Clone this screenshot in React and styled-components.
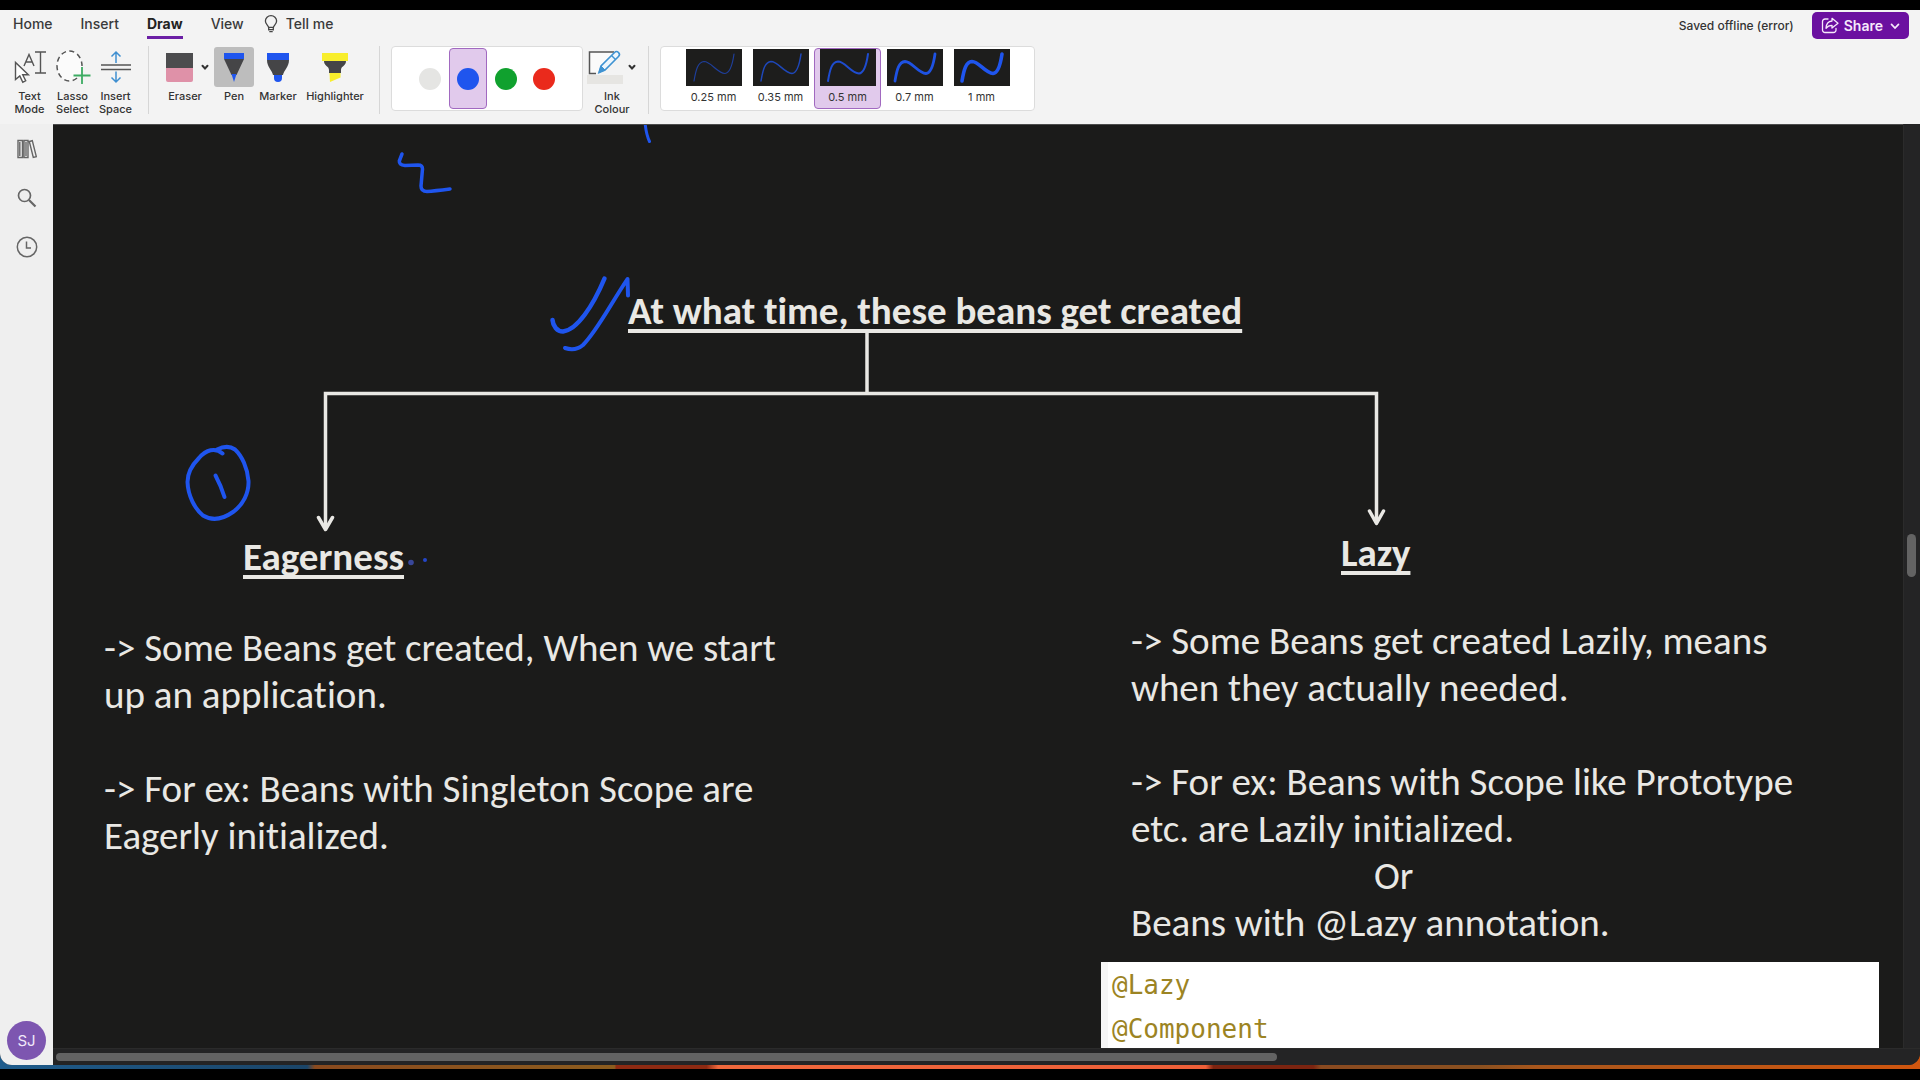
import React, { useState } from "react";
import styled, { createGlobalStyle } from "styled-components";

const UI_FONT = `Inter, "Liberation Sans", sans-serif`;
const NOTE_FONT = `Calibri, Carlito, Lato, sans-serif`;
const INK = "#1f55ee";
const CHALK = "#e9e8e4";

const GlobalStyle = createGlobalStyle`
  * { box-sizing: border-box; }
  body { margin: 0; background: #000; font-family: ${UI_FONT}; color: #333; }
  button { font: inherit; color: inherit; background: none; border: 0; padding: 0; margin: 0; }
  p, h1, h2, pre { margin: 0; }
  svg { display: block; flex: none; }
`;

const Screen = styled.div`
  height: 100vh;
  padding: 10px 0 11px;
  display: flex;
`;

const Desktop = styled.div`
  flex: 1;
  min-width: 0;
  display: flex;
  padding-bottom: 4px;
  background: linear-gradient(
    90deg,
    #1f5c8c 0%, #1b4568 16%, #8a4a1e 16.4%, #8c5c1e 32%,
    #8e2a12 32.1%, #8e2a12 36.8%, #f0683c 37.4%, #ee5f38 62.8%,
    #7c2410 63.2%, #7c2410 68.4%, #8a4a20 68.8%, #8a5020 77%, #a8561c 80%, #d0560f 100%
  );
`;

const Window = styled.div`
  flex: 1;
  min-width: 0;
  display: flex;
  flex-direction: column;
  background: #242425;
  border-radius: 0 0 12px 12px;
  overflow: hidden;
`;

const Ribbon = styled.header`
  height: 114px;
  flex: none;
  background: #f3f3f3;
`;

const TabRow = styled.div`
  display: flex;
  align-items: flex-start;
  justify-content: space-between;
  height: 36px;
  padding: 0 11px 0 13px;
`;

const TabBar = styled.div`
  display: flex;
  gap: 20px;
`;

const Tabs = styled.nav`
  display: flex;
  gap: 28px;
`;

const Tab = styled.button`
  height: 29px;
  padding-top: 2px;
  line-height: 24px;
  font-size: 14px;
  font-weight: ${(p) => (p.$active ? 700 : 500)};
  color: ${(p) => (p.$active ? "#222" : "#3a3a3a")};
  border-bottom: 3px solid ${(p) => (p.$active ? "#6b1fa5" : "transparent")};
  display: flex;
  align-items: center;
  gap: 8px;
`;

const Actions = styled.div`
  display: flex;
  align-items: center;
  gap: 18px;
  padding-top: 2px;
`;

const Status = styled.span`
  font-size: 12px;
  font-weight: 500;
`;

const ShareButton = styled.button`
  display: flex;
  align-items: center;
  gap: 5px;
  height: 27px;
  padding: 0 7px 0 9px;
  border-radius: 5px;
  background: #6b10a0;
  color: #f6e9fb;
  font-size: 14px;
  font-weight: 600;
`;

const Tools = styled.div`
  display: flex;
  align-items: flex-start;
  padding-left: 8px;
`;

const ToolGroup = styled.div`
  display: flex;
  gap: ${(p) => p.$gap || 0}px;
`;

const Divider = styled.div`
  width: 1px;
  height: 68px;
  margin: 0 11px;
  background: #d6d6d6;
`;

const Tool = styled.button`
  width: ${(p) => p.$w}px;
  padding-top: 1px;
  display: flex;
  flex-direction: column;
  align-items: center;
  gap: 3px;
  font-size: 11px;
  font-weight: 500;
  line-height: 13px;
`;

const ToolIcon = styled.span`
  width: ${(p) => (p.$split ? "100%" : "40px")};
  height: 40px;
  display: flex;
  align-items: center;
  justify-content: ${(p) => (p.$split ? "space-between" : "center")};
  border-radius: 3px;
  background: ${(p) => (p.$active ? "#bdbdbd" : "transparent")};
`;

const Panel = styled.div`
  display: flex;
  height: 65px;
  padding: 1px 19px 0;
  background: #fff;
  border: 1px solid #dcdcdc;
  border-radius: 4px;
`;

const Choice = styled.button`
  width: ${(p) => p.$w}px;
  height: 61px;
  border: 1px solid ${(p) => (p.$active ? "#a169c0" : "transparent")};
  border-radius: 4px;
  background: ${(p) => (p.$active ? "#e1caec" : "transparent")};
  display: flex;
  flex-direction: column;
  align-items: center;
  justify-content: ${(p) => (p.$top ? "flex-start" : "center")};
  gap: 4px;
  font-size: 11px;
  line-height: 14px;
`;

const Dot = styled.span`
  width: 22px;
  height: 22px;
  border-radius: 50%;
  background: ${(p) => p.$color};
`;

const Body = styled.div`
  flex: 1;
  min-height: 0;
  display: grid;
  grid-template-columns: 53px minmax(0, 1fr) 17px;
  grid-template-rows: minmax(0, 1fr) 17px;
`;

const Sidebar = styled.aside`
  grid-row: 1 / 3;
  display: flex;
  flex-direction: column;
  align-items: center;
  padding-bottom: 5px;
  background: #efefef;
`;

const SideButton = styled.button`
  width: 100%;
  height: 49px;
  display: flex;
  align-items: center;
  justify-content: center;
  color: #666;
`;

const Avatar = styled.button`
  width: 39px;
  height: 39px;
  margin-top: auto;
  border-radius: 50%;
  background: #7d56b0;
  color: #f1e8fa;
  font-size: 15px;
`;

const Canvas = styled.main`
  position: relative;
  overflow: hidden;
  background: #1b1b1a;
  border-top: 1px solid #4c4c4c;
  color: ${CHALK};
  font-family: ${NOTE_FONT};
  font-size: 39px;
  line-height: 47px;
  font-variant-ligatures: none;
`;

const Placed = styled.div`
  position: absolute;
  left: ${(p) => p.$x}px;
  top: ${(p) => p.$y}px;
  white-space: nowrap;
`;

const Heading = styled.h1`
  font-size: 39px;
  line-height: 47px;
  font-weight: 700;
  text-decoration: underline;
  text-decoration-thickness: 4px;
  text-underline-offset: 5px;
  text-decoration-skip-ink: none;
`;

const Note = styled.section`
  display: flex;
  flex-direction: column;
`;

const Para = styled.p`
  margin-bottom: ${(p) => (p.$spaced ? 47 : 0)}px;
`;

const Alternative = styled.p`
  padding-left: 243px;
`;

const Snippet = styled.pre`
  width: 778px;
  height: 132px;
  padding: 1px 0 0 4px;
  background: #fff;
  border-left: 7px solid #f6f6f6;
  color: #9c8423;
  font-family: "DejaVu Sans Mono", monospace;
  font-size: 26px;
  line-height: 44px;
`;

const Drawing = styled.svg`
  position: absolute;
  left: 0;
  top: 0;
  pointer-events: none;
`;

const Track = styled.div`
  display: flex;
  flex-direction: ${(p) => (p.$vertical ? "column" : "row")};
  padding: ${(p) => (p.$vertical ? "0 4px 0 3px" : "4px 3px")};
  background: #242425;
  border-${(p) => (p.$vertical ? "left" : "top")}: 1px solid #2b2b2b;
  grid-column: ${(p) => (p.$vertical ? "3" : "2 / 4")};
  &::before { content: ""; flex: ${(p) => p.$before}; }
  &::after { content: ""; flex: ${(p) => p.$after}; }
`;

const Thumb = styled.div`
  flex: ${(p) => p.$size};
  border-radius: 5px;
  background: #636363;
`;

const Chevron = ({ size = 10, width = 2 }) => (
  <svg width={size} height={size} viewBox="0 0 10 10" fill="none" stroke="currentColor" strokeWidth={width}>
    <path d="M2.500 3.800 5 6.500 7.500 3.800" strokeLinecap="round" />
  </svg>
);

const Bulb = () => (
  <svg width="14" height="18" viewBox="0 0 14 18" fill="none" stroke="#444" strokeWidth="1.3">
    <path d="M4.6 12.4C4.5 10.4 1.4 9.3 1.4 6a5.6 5.3 0 0 1 11.2 0c0 3.300-3.100 4.400-3.200 6.400zM4.800 14.600h4.400M5.300 16.700h3.400M4.700 12.400v3M9.300 12.400v3" />
  </svg>
);

const ShareIcon = () => (
  <svg width="18" height="17" viewBox="0 0 18 17" fill="none" stroke="currentColor" strokeWidth="1.300" strokeLinejoin="round" strokeLinecap="round">
    <path d="M7 2H4a2.500 2.500 0 0 0-2.500 2.500v8.500A2.500 2.500 0 0 0 4 15.500h8.500a2.500 2.500 0 0 0 2.500-2.500v-1.500" />
    <path d="M11 1.300 17 6.200 11 11V8.300c-3 0-4.600 1-6 3 .2-4 2-7 6-7.300z" />
  </svg>
);

const TextModeIcon = () => (
  <svg width="34" height="34" viewBox="0 0 34 34" fill="none" stroke="#555" strokeWidth="1.400">
    <path d="M22 2h11M22 23h11M27.500 2v21" />
    <path d="M11 16 16 4.500 21 16M12.800 12h6.500" />
    <path d="M2.500 12.500v17l4.300-3.600 3 6.300 2.900-1.400-3-6.100h5.700z" fill="#fff" />
  </svg>
);

const LassoIcon = () => (
  <svg width="36" height="36" viewBox="0 0 36 36" fill="none">
    <ellipse cx="14.500" cy="17" rx="12.500" ry="15" fill="#fbfbfb" />
    <path d="M22 29A12.500 15 0 1 1 27 17" stroke="#555" strokeWidth="1.500" strokeDasharray="5 3.500" />
    <path d="M27 18v17M18.500 26.500h17" stroke="#3cab62" strokeWidth="1.800" />
  </svg>
);

const InsertSpaceIcon = () => (
  <svg width="32" height="34" viewBox="0 0 32 34" fill="none">
    <path d="M1 15h30M1 19.500h30" stroke="#555" strokeWidth="1.500" />
    <path d="M16 13V2M11.500 6.500 16 2l4.500 4.500M16 21.500V32M11.500 27.500 16 32l4.500-4.500" stroke="#3f8fd0" strokeWidth="1.500" />
  </svg>
);

const EraserIcon = () => (
  <svg width="35" height="32" viewBox="-6 0 35 32">
    <path d="M0 2h27v16H0z" fill="#4c4c4e" />
    <path d="M0 17h27v12a2 2 0 0 1-2 2H2a2 2 0 0 1-2-2z" fill="#df91a8" />
  </svg>
);

const PenIcon = () => (
  <svg width="22" height="32" viewBox="0 0 22 32">
    <path d="M1 2h20v6H1z" fill={INK} />
    <path d="M1 8h20l-7.500 16h-5z" fill="#454547" />
    <path d="M8.500 23h5L11 31z" fill={INK} />
  </svg>
);

const MarkerIcon = () => (
  <svg width="24" height="32" viewBox="0 0 24 32">
    <path d="M1 2h22v7H1z" fill={INK} />
    <path d="M1 9h22c0 7-5 10-6 15H7C6 19 1 16 1 9z" fill="#454547" />
    <path d="M8 24h8v3a4 4 0 0 1-8 0z" fill={INK} />
  </svg>
);

const HighlighterIcon = () => (
  <svg width="28" height="32" viewBox="0 0 28 32">
    <path d="M1 2h26v8H1z" fill="#f8ee2c" />
    <path d="M3 10h22c0 5-5 5-5 9v3H8v-3c0-4-5-4-5-9z" fill="#454547" />
    <path d="M8.500 22h11v4.500L9 31z" fill="#f8ee2c" />
  </svg>
);

const InkColourIcon = () => (
  <svg width="36" height="36" viewBox="0 0 36 36" fill="none">
    <path d="M0 26h36v9H0z" fill="#e6e5e2" />
    <path d="M2.500 3h25L10 24H3z" fill="#fafafa" />
    <path d="M27 3H2.500v21.500H9" stroke="#555" strokeWidth="1.500" />
    <path d="M12 23.500 14 17 27.500 3.500a2.800 2.800 0 0 1 4 4L18 21z" fill="#eef6fc" stroke="#3f93d2" strokeWidth="1.600" />
    <path d="M12 23.500 14 17l4 4z" fill="#3f93d2" stroke="#3f93d2" />
    <path d="m24.500 6.500 4 4" stroke="#3f93d2" strokeWidth="1.500" />
  </svg>
);

const StrokeSample = ({ width, opacity }) => (
  <svg width="56" height="37" viewBox="0 0 56 37" fill="none">
    <path d="M0 0h56v37H0z" fill="#1d1d1c" />
    <path
      d="M8 32C10 20 12 13 18 12.500 25 12.500 31 24 39 24.500 45 24 47 12 48 5"
      stroke={INK}
      strokeWidth={width}
      strokeOpacity={opacity}
      strokeLinecap="round"
    />
  </svg>
);

const BooksIcon = () => (
  <svg width="20" height="20" viewBox="0 0 20 20" fill="none" stroke="currentColor" strokeWidth="1.400">
    <path d="M1 1.500h4.500v17H1zM7 1.500h4v17H7zM12.300 2.500l3-.8 4 16-3 .8zM2.800 3v14M9 3v14" />
  </svg>
);

const SearchIcon = () => (
  <svg width="20" height="20" viewBox="0 0 20 20" fill="none" stroke="currentColor">
    <circle cx="7.500" cy="7.500" r="6" strokeWidth="1.700" />
    <path d="m12 12 6.500 6.500" strokeWidth="2.200" />
  </svg>
);

const ClockIcon = () => (
  <svg width="22" height="22" viewBox="0 0 22 22" fill="none" stroke="currentColor" strokeWidth="1.500">
    <circle cx="11" cy="11" r="9.700" />
    <path d="M10.500 5.500V12H15" />
  </svg>
);

const COLOURS = [
  ["Grey", "#e5e5e3"],
  ["Blue", INK],
  ["Green", "#10a12e"],
  ["Red", "#ea2a1c"],
];

const NIBS = [
  ["0.25 mm", 1.2, 0.6],
  ["0.35 mm", 1.5, 0.75],
  ["0.5 mm", 2, 0.85],
  ["0.7 mm", 2.8, 0.95],
  ["1 mm", 3.6, 1],
];

export default function App() {
  const [colour, setColour] = useState("Blue");
  const [nib, setNib] = useState("0.5 mm");

  return (
    <>
      <GlobalStyle />
      <Screen>
        <Desktop>
          <Window>
            <Ribbon>
              <TabRow>
                <TabBar>
                  <Tabs>
                    <Tab>Home</Tab>
                    <Tab>Insert</Tab>
                    <Tab $active>Draw</Tab>
                    <Tab>View</Tab>
                  </Tabs>
                  <Tab><Bulb />Tell me</Tab>
                </TabBar>
                <Actions>
                  <Status>Saved offline (error)</Status>
                  <ShareButton><ShareIcon />Share<Chevron size={14} width={1.2} /></ShareButton>
                </Actions>
              </TabRow>
              <Tools>
                <ToolGroup>
                  <Tool $w={43}><ToolIcon><TextModeIcon /></ToolIcon>Text<br />Mode</Tool>
                  <Tool $w={43}><ToolIcon><LassoIcon /></ToolIcon>Lasso<br />Select</Tool>
                  <Tool $w={43}><ToolIcon><InsertSpaceIcon /></ToolIcon>Insert<br />Space</Tool>
                </ToolGroup>
                <Divider />
                <ToolGroup $gap={4}>
                  <Tool $w={50}><ToolIcon $split><EraserIcon /><Chevron /></ToolIcon>Eraser</Tool>
                  <Tool $w={40}><ToolIcon $active><PenIcon /></ToolIcon>Pen</Tool>
                  <Tool $w={40}><ToolIcon><MarkerIcon /></ToolIcon>Marker</Tool>
                  <Tool $w={66}><ToolIcon><HighlighterIcon /></ToolIcon>Highlighter</Tool>
                </ToolGroup>
                <Divider />
                <ToolGroup $gap={4}>
                  <Panel>
                    {COLOURS.map(([name, value]) => (
                      <Choice key={name} $w={38} $active={colour === name} aria-label={name} aria-pressed={colour === name} onClick={() => setColour(name)}>
                        <Dot $color={value} />
                      </Choice>
                    ))}
                  </Panel>
                  <Tool $w={50}><ToolIcon $split><InkColourIcon /><Chevron /></ToolIcon>Ink<br />Colour</Tool>
                </ToolGroup>
                <Divider />
                <Panel>
                  {NIBS.map(([name, width, opacity]) => (
                    <Choice key={name} $w={67} $top $active={nib === name} aria-pressed={nib === name} onClick={() => setNib(name)}>
                      <StrokeSample width={width} opacity={opacity} />
                      {name}
                    </Choice>
                  ))}
                </Panel>
              </Tools>
            </Ribbon>

            <Body>
              <Sidebar>
                <SideButton aria-label="Notebooks"><BooksIcon /></SideButton>
                <SideButton aria-label="Search"><SearchIcon /></SideButton>
                <SideButton aria-label="Recent"><ClockIcon /></SideButton>
                <Avatar>SJ</Avatar>
              </Sidebar>

              <Canvas>
                <Placed $x={575} $y={162}>
                  <Heading>At what time, these beans get created</Heading>
                </Placed>
                <Placed $x={190} $y={408}>
                  <Heading as="h2">Eagerness</Heading>
                </Placed>
                <Placed $x={1288} $y={404}>
                  <Heading as="h2">Lazy</Heading>
                </Placed>
                <Placed $x={51} $y={499}>
                  <Note>
                    <Para $spaced>-&gt; Some Beans get created, When we start<br />up an application.</Para>
                    <Para>-&gt; For ex: Beans with Singleton Scope are<br />Eagerly initialized.</Para>
                  </Note>
                </Placed>
                <Placed $x={1078} $y={492}>
                  <Note>
                    <Para $spaced>-&gt; Some Beans get created Lazily, means<br />when they actually needed.</Para>
                    <Para>-&gt; For ex: Beans with Scope like Prototype<br />etc. are Lazily initialized.</Para>
                    <Alternative>Or</Alternative>
                    <Para>Beans with @Lazy annotation.</Para>
                  </Note>
                </Placed>
                <Placed $x={1048} $y={837}>
                  <Snippet>{"@Lazy\n@Component"}</Snippet>
                </Placed>
                <Drawing width="1850" height="923" viewBox="53 125 1850 923" fill="none" strokeLinecap="round" strokeLinejoin="round">
                  <g stroke={CHALK} strokeWidth="3.500">
                    <path d="M867 332v61M325.500 529V393.500H1376.500V523" strokeLinecap="butt" strokeLinejoin="miter" />
                    <path d="M318.500 517.500 325.500 529.500 332.500 517.500M1369.500 511 1376.500 523.500 1383.500 511" />
                  </g>
                  <g stroke={INK} strokeWidth="4">
                    <path d="M402 154 399.300 161Q399 165 405 165.500L418 165Q422.500 165 422.500 169L421 186Q421 191.500 427 191.500 434 191 450 189" strokeWidth="3.500" />
                    <path d="M645 122Q646 134 649.500 141.500" strokeWidth="3" />
                    <path d="M552.500 320C553 326 557 331.500 563 331.500 577 330 593 306 604.500 278.500" strokeWidth="4.500" />
                    <path d="M565 348C571 350 577 350 583 345 597 331 610 305 627.500 279L628 295.500" />
                    <path d="M222.500 453.500C215 447 206 450 199 458 191 466 187.500 474 187.500 482 188 496 195 509 203 515.500 212 521 223 519 233 512 243 505 249 493 248.500 481 247.500 468 242 456 235 449.500 230 446 223 446.500 217 449.500" />
                    <path d="M215.500 475.500C219 482 222 489 224.500 497" />
                  </g>
                  <circle cx="411" cy="562.500" r="2.800" fill="#39479a" />
                  <circle cx="425" cy="560" r="2" fill="#2446c8" />
                </Drawing>
              </Canvas>

              <Track $vertical $before={410} $after={470}><Thumb $size={43} /></Track>
              <Track $before={0} $after={640}><Thumb $size={1220} /></Track>
            </Body>
          </Window>
        </Desktop>
      </Screen>
    </>
  );
}
